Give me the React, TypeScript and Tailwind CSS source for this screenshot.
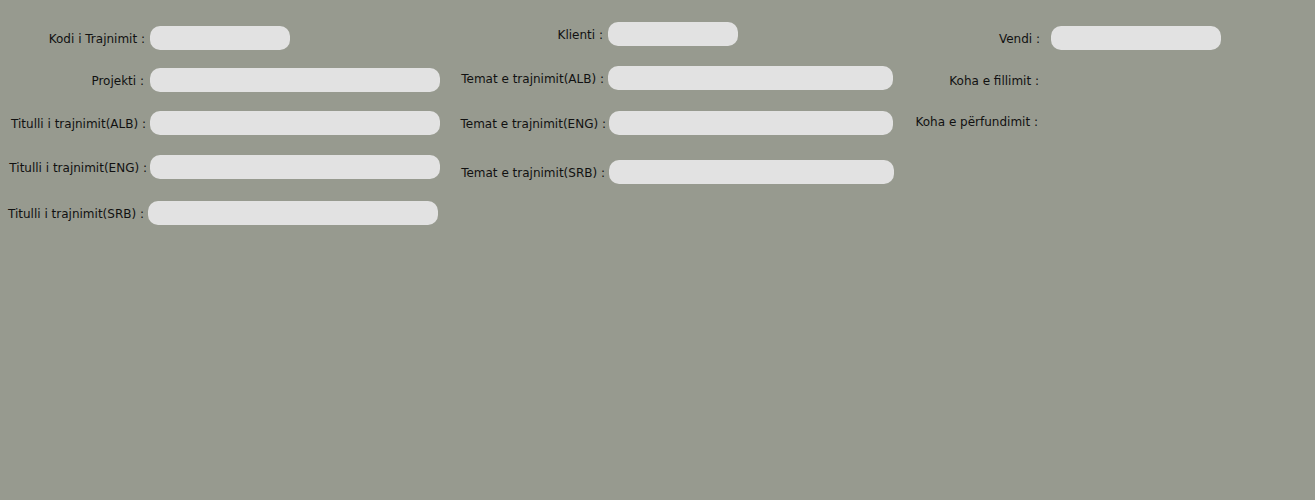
import React from "react";

const font = { fontFamily: '"DejaVu Sans", Verdana, sans-serif' };

function Input({ w }: { w: string }) {
  return <div className={`h-6 rounded-[10px] bg-[#e2e2e2] ${w}`} />;
}

export default function App() {
  return (
    <div
      className="w-[1315px] h-[500px] bg-[#979a8f] text-[12px] text-[#111] flex"
      style={font}
    >
      {/* Column 1 */}
      <div className="w-[450px] flex flex-col pt-[26px]">
        <div className="flex items-center h-6">
          <div className="w-[146px] text-right pr-[1px] pt-[2px]">Kodi i Trajnimit :</div>
          <div className="ml-[4px]"><Input w="w-[140px]" /></div>
        </div>
        <div className="flex items-center h-6 mt-[18px]">
          <div className="w-[146px] text-right pr-[2px] pt-[2px]">Projekti :</div>
          <div className="ml-[4px]"><Input w="w-[290px]" /></div>
        </div>
        <div className="flex items-center h-6 mt-[19px]">
          <div className="w-[146px] text-right pt-[2px]">Titulli i trajnimit(ALB) :</div>
          <div className="ml-[4px]"><Input w="w-[290px]" /></div>
        </div>
        <div className="flex items-center h-6 mt-[20px]">
          <div className="w-[147px] text-right whitespace-nowrap pt-[2px]">Titulli i trajnimit(ENG) :</div>
          <div className="ml-[3px]"><Input w="w-[290px]" /></div>
        </div>
        <div className="flex items-center h-6 mt-[22px]">
          <div className="w-[144px] text-right whitespace-nowrap pt-[2px]">Titulli i trajnimit(SRB) :</div>
          <div className="ml-[4px]"><Input w="w-[290px]" /></div>
        </div>
      </div>

      {/* Column 2 */}
      <div className="w-[450px] flex flex-col pt-[22px]">
        <div className="flex items-center h-6">
          <div className="w-[154px] text-right pr-[1px] pt-[2px]">Klienti :</div>
          <div className="ml-[4px]"><Input w="w-[130px]" /></div>
        </div>
        <div className="flex items-center h-6 mt-[20px]">
          <div className="w-[154px] text-right whitespace-nowrap pt-[2px]">Temat e trajnimit(ALB) :</div>
          <div className="ml-[4px]"><Input w="w-[285px]" /></div>
        </div>
        <div className="flex items-center h-6 mt-[21px]">
          <div className="w-[156px] text-right whitespace-nowrap pt-[2px]">Temat e trajnimit(ENG) :</div>
          <div className="ml-[3px]"><Input w="w-[284px]" /></div>
        </div>
        <div className="flex items-center h-6 mt-[25px]">
          <div className="w-[155px] text-right whitespace-nowrap pt-[2px]">Temat e trajnimit(SRB) :</div>
          <div className="ml-[4px]"><Input w="w-[285px]" /></div>
        </div>
      </div>

      {/* Column 3 */}
      <div className="flex-1 flex flex-col pt-[26px]">
        <div className="flex items-center h-6">
          <div className="w-[140px] text-right pt-[2px]">Vendi :</div>
          <div className="ml-[11px]"><Input w="w-[170px]" /></div>
        </div>
        <div className="flex items-center h-6 mt-[18px]">
          <div className="w-[139px] text-right pt-[2px]">Koha e fillimit :</div>
        </div>
        <div className="flex items-center h-6 mt-[17px]">
          <div className="w-[138px] text-right whitespace-nowrap pt-[2px]">Koha e përfundimit :</div>
        </div>
      </div>
    </div>
  );
}
